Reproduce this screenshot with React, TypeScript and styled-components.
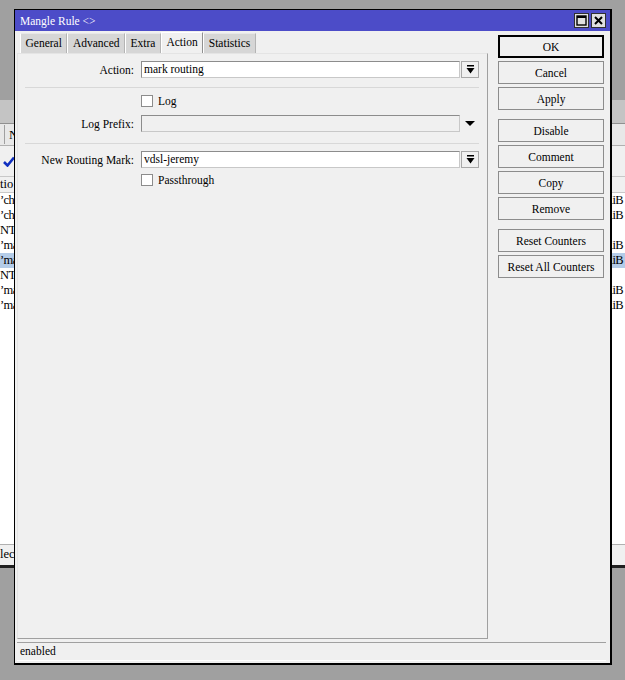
import React from "react";
import styled, { createGlobalStyle } from "styled-components";

const Global = createGlobalStyle`
  html, body { margin: 0; padding: 0; }
  body { font-family: "Liberation Serif", "Times New Roman", serif; font-size: 11.5px; color: #000; }
`;

const Desktop = styled.div`
  position: relative;
  width: 625px;
  height: 680px;
  background: #a0a0a0;
  overflow: hidden;
`;

/* ---------- window behind the dialog ---------- */
const BackWindow = styled.div`
  position: absolute;
  left: 0;
  top: 100px;
  width: 625px;
  height: 468px;
  background: #ffffff;
  display: flex;
  flex-direction: column;
  border-bottom: 3px solid #202020;
  box-sizing: border-box;
`;
const BackTitle = styled.div`
  height: 23px;
  background: #c4c4c4;
  border-bottom: 1px solid #909090;
`;
const BackTabs = styled.div`
  height: 21px;
  background: #e8e8e8;
  border-bottom: 1px solid #b0b0b0;
  display: flex;
  align-items: center;
  padding-left: 4px;
`;
const BackTabCell = styled.div`
  border-left: 1px solid #a0a0a0;
  padding-left: 4px;
  height: 19px;
  line-height: 19px;
  font-size: 13px;
`;
const BackToolbar = styled.div`
  height: 30px;
  background: #f0f0f0;
  display: flex;
  align-items: center;
  padding-left: 3px;
`;
const BackHeader = styled.div`
  height: 15px;
  line-height: 15px;
  background: #f0f0f0;
  border-top: 1px solid #c8c8c8;
  border-bottom: 1px solid #c8c8c8;
  font-size: 12.5px;
`;
const BackRow = styled.div<{ $sel?: boolean }>`
  height: 15px;
  line-height: 15px;
  font-size: 12.5px;
  letter-spacing: -0.6px;
  background: ${(p) => (p.$sel ? "#b4cce8" : "#ffffff")};
  display: flex;
  justify-content: space-between;
  padding: 0 2px 0 0;
`;
const BackFill = styled.div`
  flex: 1;
  background: #ffffff;
`;
const BackStatus = styled.div`
  height: 20px;
  line-height: 18px;
  background: #f0f0f0;
  border-top: 1px solid #b0b0b0;
  font-size: 12.5px;
`;

/* ---------- dialog ---------- */
const Dialog = styled.div`
  position: absolute;
  left: 14px;
  top: 9px;
  width: 598px;
  height: 656px;
  box-sizing: border-box;
  border: 1px solid #000;
  border-right-width: 2px;
  border-bottom-width: 2px;
  background: #f0f0f0;
  display: flex;
  flex-direction: column;
`;
const TitleBar = styled.div`
  height: 21px;
  background: #4c4cc8;
  color: #fff;
  display: flex;
  align-items: center;
  padding: 0 4px 0 5px;
  flex-shrink: 0;
`;
const TitleText = styled.div`
  flex: 1;
`;
const TitleButton = styled.div`
  width: 13px;
  height: 13px;
  background: #e0e0e0;
  border: 1px solid #303030;
  margin-left: 2px;
  display: flex;
  align-items: center;
  justify-content: center;
`;
const Body = styled.div`
  flex: 1;
  display: flex;
  min-height: 0;
`;
const Main = styled.div`
  width: 471px;
  margin-left: 2px;
  padding-top: 1px;
  display: flex;
  flex-direction: column;
`;
const Tabs = styled.div`
  display: flex;
  align-items: flex-end;
  height: 21px;
  padding-left: 3px;
`;
const Tab = styled.div<{ $active?: boolean }>`
  height: ${(p) => (p.$active ? 21 : 20)}px;
  box-sizing: border-box;
  padding: 0 4.5px;
  line-height: 19px;
  background: ${(p) => (p.$active ? "#f0f0f0" : "#d6d6d6")};
  border-left: 1px solid #ffffff;
  border-right: 1px solid ${(p) => (p.$active ? "#909090" : "#b4b4b4")};
  border-top: 1px solid ${(p) => (p.$active ? "#ffffff" : "#e8e8e8")};
  white-space: nowrap;
`;
const Panel = styled.div`
  flex: 1;
  box-sizing: border-box;
  border: 1px solid #a0a0a0;
  border-left-color: #e4e4e4;
  border-top-color: #e4e4e4;
  padding: 0 8px 0 0;
  display: flex;
  flex-direction: column;
`;
const Row = styled.div<{ $mt: number }>`
  display: flex;
  align-items: center;
  margin-top: ${(p) => p.$mt}px;
  height: 17px;
`;
const Label = styled.div`
  width: 116px;
  margin-right: 7px;
  text-align: right;
  white-space: nowrap;
`;
const Field = styled.div<{ $disabled?: boolean }>`
  width: 319px;
  height: 17px;
  box-sizing: border-box;
  border: 1px solid #8c8c8c;
  border-right-color: #c8c8c8;
  border-bottom-color: #c8c8c8;
  background: ${(p) => (p.$disabled ? "#f0f0f0" : "#ffffff")};
  padding-left: 2px;
  line-height: 15px;
`;
const DropButton = styled.div`
  width: 18px;
  height: 17px;
  box-sizing: border-box;
  margin-left: 1px;
  border: 1px solid #a8a8a8;
  background: #f0f0f0;
  display: flex;
  align-items: center;
  justify-content: center;
`;
const ArrowSlot = styled.div`
  width: 18px;
  margin-left: 1px;
  display: flex;
  align-items: center;
  justify-content: center;
`;
const Separator = styled.div<{ $mt: number }>`
  margin-top: ${(p) => p.$mt}px;
  margin-left: 7px;
  height: 1px;
  background: #d8d8d8;
`;
const CheckRow = styled.div<{ $mt: number }>`
  display: flex;
  align-items: center;
  margin-top: ${(p) => p.$mt}px;
  margin-left: 123px;
  height: 12px;
`;
const Box = styled.div`
  width: 12px;
  height: 12px;
  box-sizing: border-box;
  border: 1px solid #8c8c8c;
  background: #fff;
  margin-right: 5px;
`;
const Buttons = styled.div`
  margin-left: 10px;
  padding-top: 4px;
  display: flex;
  flex-direction: column;
  width: 106px;
`;
const Button = styled.div<{ $default?: boolean; $gap?: number }>`
  height: 23px;
  box-sizing: border-box;
  margin-top: ${(p) => p.$gap ?? 3}px;
  border: ${(p) => (p.$default ? "2px solid #000" : "1px solid #8c8c8c")};
  background: #f0f0f0;
  display: flex;
  align-items: center;
  justify-content: center;
  white-space: nowrap;
  &:first-child { margin-top: 0; }
`;
const StatusBar = styled.div`
  height: 19px;
  margin: 3px 4px 2px 2px;
  box-sizing: border-box;
  border-top: 1px solid #a0a0a0;
  border-bottom: 1px solid #ffffff;
  padding-left: 3px;
  line-height: 17px;
  flex-shrink: 0;
`;

const DropIcon = () => (
  <svg width="9" height="9" viewBox="0 0 9 9">
    <rect x="1" y="0" width="7" height="1.5" fill="#000" />
    <path d="M0.5 3 H8.5 L4.5 8.5 Z" fill="#000" />
  </svg>
);
const Triangle = () => (
  <svg width="10" height="5" viewBox="0 0 10 5">
    <path d="M0 0 H10 L5 5 Z" fill="#000" />
  </svg>
);

const backRows: { l: string; r: string; sel?: boolean }[] = [
  { l: "’ch", r: "KiB" },
  { l: "’ch", r: "KiB" },
  { l: "NTI", r: "" },
  { l: "’ma", r: "KiB" },
  { l: "’ma", r: "KiB", sel: true },
  { l: "NTI", r: "" },
  { l: "’ma", r: "KiB" },
  { l: "’ma", r: "KiB" },
];

export default function App() {
  return (
    <Desktop>
      <Global />
      <BackWindow>
        <BackTitle />
        <BackTabs>
          <BackTabCell>N</BackTabCell>
        </BackTabs>
        <BackToolbar>
          <svg width="12" height="11" viewBox="0 0 12 11">
            <path d="M1 6 L4.5 9.5 L11 1.5" stroke="#1030c0" strokeWidth="2.6" fill="none" />
          </svg>
        </BackToolbar>
        <BackHeader>tio</BackHeader>
        {backRows.map((r, i) => (
          <BackRow key={i} $sel={r.sel}>
            <span>{r.l}</span>
            <span>{r.r}</span>
          </BackRow>
        ))}
        <BackFill />
        <BackStatus>lec</BackStatus>
      </BackWindow>

      <Dialog>
        <TitleBar>
          <TitleText>Mangle Rule &lt;&gt;</TitleText>
          <TitleButton>
            <svg width="11" height="11" viewBox="0 0 11 11">
              <rect x="1" y="1" width="9" height="9" fill="none" stroke="#000" strokeWidth="1.4" />
              <rect x="1" y="1" width="9" height="2" fill="#000" />
            </svg>
          </TitleButton>
          <TitleButton>
            <svg width="11" height="11" viewBox="0 0 11 11">
              <path d="M2 2 L9 9 M9 2 L2 9" stroke="#000" strokeWidth="2" />
            </svg>
          </TitleButton>
        </TitleBar>
        <Body>
          <Main>
            <Tabs>
              <Tab>General</Tab>
              <Tab>Advanced</Tab>
              <Tab>Extra</Tab>
              <Tab $active>Action</Tab>
              <Tab>Statistics</Tab>
            </Tabs>
            <Panel>
              <Row $mt={7}>
                <Label>Action:</Label>
                <Field>mark routing</Field>
                <DropButton>
                  <DropIcon />
                </DropButton>
              </Row>
              <Separator $mt={9} />
              <CheckRow $mt={7}>
                <Box />
                Log
              </CheckRow>
              <Row $mt={8}>
                <Label>Log Prefix:</Label>
                <Field $disabled />
                <ArrowSlot>
                  <Triangle />
                </ArrowSlot>
              </Row>
              <Separator $mt={11} />
              <Row $mt={7}>
                <Label>New Routing Mark:</Label>
                <Field>vdsl-jeremy</Field>
                <DropButton>
                  <DropIcon />
                </DropButton>
              </Row>
              <CheckRow $mt={6}>
                <Box />
                Passthrough
              </CheckRow>
            </Panel>
          </Main>
          <Buttons>
            <Button $default>OK</Button>
            <Button>Cancel</Button>
            <Button>Apply</Button>
            <Button $gap={9}>Disable</Button>
            <Button>Comment</Button>
            <Button>Copy</Button>
            <Button>Remove</Button>
            <Button $gap={9}>Reset Counters</Button>
            <Button>Reset All Counters</Button>
          </Buttons>
        </Body>
        <StatusBar>enabled</StatusBar>
      </Dialog>
    </Desktop>
  );
}
